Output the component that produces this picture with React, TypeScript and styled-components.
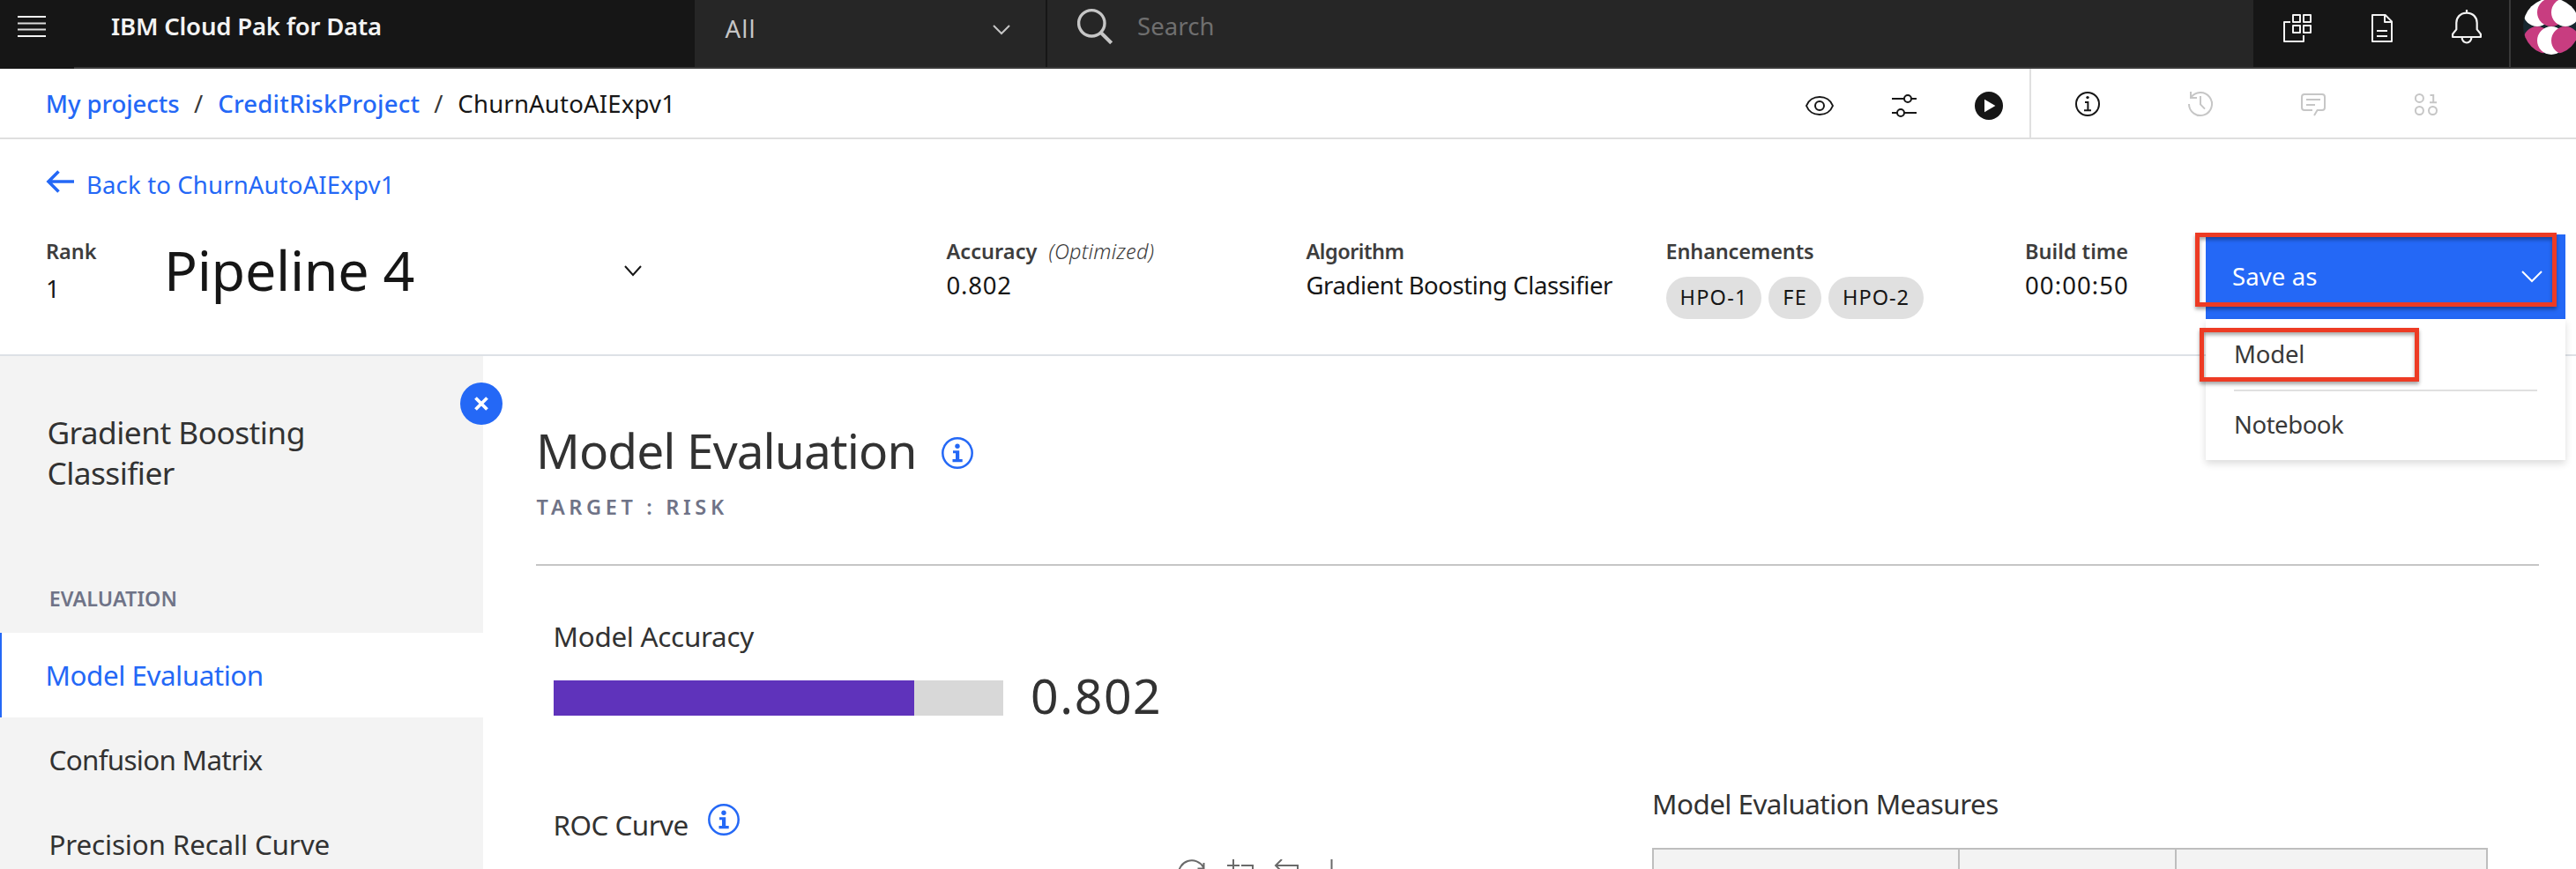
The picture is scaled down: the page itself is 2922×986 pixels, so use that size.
import React from "react";
import styled, { createGlobalStyle, css } from "styled-components";

const color = {
  ink: "#161616",
  text: "#323232",
  label: "#3d3d3d",
  blue: "#2468f6",
  slate: "#6f7387",
  panel: "#f3f3f3",
  line: "#e0e0e0",
  purple: "#5f33bb",
  alert: "#ed3b24",
};

const GlobalStyle = createGlobalStyle`
  * { box-sizing: border-box; }
  body {
    margin: 0;
    background: #fff;
    color: ${color.ink};
    font-family: "Noto Sans", "Open Sans", sans-serif;
    font-size: 27.5px;
    overflow: hidden;
  }
  svg { display: block; flex: none; }
`;

const Page = styled.div`
  display: flex;
  flex-direction: column;
  width: 2922px;
  height: 986px;
  overflow: hidden;
`;

/* Text with its own tracking, in px */
const Tracked = styled.span<{ $ls?: number }>`
  letter-spacing: ${(p) => p.$ls ?? 0}px;
  white-space: nowrap;
`;

/* ---------- Global header ---------- */

const Header = styled.header`
  display: flex;
  flex: none;
  height: 78px;
  background: ${color.ink};
`;

const MenuButton = styled.div`
  width: 84px;
  padding: 18px 0 0 20px;
`;

const HeaderMain = styled.div`
  display: flex;
  flex: 1;
  border-bottom: 2px solid #393939;
`;

const Brand = styled.div`
  width: 704px;
  padding-left: 42px;
  line-height: 59px;
  font-weight: 600;
  color: #f3f3f3;
`;

const ScopeSelect = styled.div`
  display: flex;
  justify-content: space-between;
  width: 400px;
  padding: 2px 40px 0 34.5px;
  border-right: 2px solid ${color.ink};
  background: #262626;
  color: #c6c6c6;
  line-height: 61px;
`;

const SearchBox = styled.div`
  display: flex;
  flex: 1;
  gap: 28px;
  padding-left: 34px;
  background: #262626;
  color: #6f6f6f;
  line-height: 60px;
`;

const HeaderActions = styled.div`
  display: flex;
  width: 290px;
  padding-left: 2px;
`;

const IconCell = styled.div<{ $w: number; $h: number }>`
  display: flex;
  align-items: center;
  justify-content: center;
  width: ${(p) => p.$w}px;
  height: ${(p) => p.$h}px;
`;

const UserCell = styled.div`
  width: 76px;
  padding-left: 14px;
  border-left: 2px solid #393939;
  overflow: hidden;
`;

/* ---------- Breadcrumb bar ---------- */

const CrumbBar = styled.div`
  display: flex;
  flex: none;
  justify-content: space-between;
  height: 80px;
  padding-left: 51.7px;
  border-bottom: 2px solid #dfdfdf;
`;

const Crumbs = styled.nav`
  display: flex;
  line-height: 80px;
`;

const Crumb = styled.span<{ $w?: number; $ls: number; $link?: boolean }>`
  width: ${(p) => (p.$w ? `${p.$w}px` : "auto")};
  letter-spacing: ${(p) => p.$ls}px;
  white-space: nowrap;
  ${(p) =>
    p.$link &&
    css`
      color: ${color.blue};
      font-weight: 500;
    `}
`;

const Slash = styled.span`
  width: 27.2px;
  color: #393939;
`;

const ToolGroup = styled.div<{ $divided?: boolean }>`
  display: flex;
  width: ${(p) => (p.$divided ? 288 : 618)}px;
  border-right: ${(p) => (p.$divided ? `2px solid ${color.line}` : "none")};
  & > * { flex: none; }
`;

const Tools = styled.div`
  display: flex;
`;

/* ---------- Pipeline summary ---------- */

const Summary = styled.section`
  flex: none;
  height: 246px;
  padding: 32px 0 0 52px;
  border-bottom: 2px solid #dde1e6;
`;

const BackLink = styled.div`
  display: flex;
  gap: 14px;
  height: 76px;
  line-height: 40px;
  color: ${color.blue};
  svg { margin-top: 2px; }
`;

const SummaryGrid = styled.div`
  display: grid;
  grid-template-columns: 134px 887.5px 408px 408px 407.5px 205px 408px;
`;

const Metric = styled.div<{ $nudge?: number }>`
  padding-top: 3px;
  & > :last-child { margin-top: ${(p) => p.$nudge ?? 3}px; }
`;

const MetricLabel = styled.div<{ $ls?: number }>`
  font-size: 23.5px;
  font-weight: 600;
  line-height: 32px;
  letter-spacing: ${(p) => p.$ls ?? 0}px;
  color: ${color.label};
  white-space: nowrap;
`;

const Hint = styled.i`
  margin-left: 13px;
  font-weight: 300;
  letter-spacing: 0.24px;
`;

const MetricValue = styled.div<{ $ls?: number }>`
  line-height: 40px;
  letter-spacing: ${(p) => p.$ls ?? 0}px;
  white-space: nowrap;
`;

const PipelinePicker = styled.div`
  display: flex;
  justify-content: space-between;
  width: 542px;
  height: 80px;
  font-size: 62.8px;
  line-height: 79px;
  svg { margin-top: 35px; }
`;

const Tags = styled.div`
  display: flex;
  gap: 8px;
`;

const Tag = styled.span<{ $w: number; $ls: number }>`
  width: ${(p) => p.$w}px;
  height: 48px;
  border-radius: 24px;
  background: ${color.line};
  font-size: 23.5px;
  line-height: 46px;
  letter-spacing: ${(p) => p.$ls}px;
  text-indent: ${(p) => p.$ls}px;
  text-align: center;
`;

const SaveAs = styled.div`
  position: relative;
  width: 408px;
`;

const SaveButton = styled.div`
  display: flex;
  justify-content: space-between;
  height: 96px;
  padding: 0 26px 0 30px;
  background: ${color.blue};
  color: #fff;
  line-height: 96px;
  svg { margin-top: 41px; }
`;

const SaveMenu = styled.div`
  position: absolute;
  top: 96px;
  left: 0;
  z-index: 1;
  width: 408px;
  height: 160px;
  padding: 0 32px;
  background: #fff;
  box-shadow: 0 4px 8px rgba(0, 0, 0, 0.14);
  color: #393939;
`;

const MenuItem = styled.div<{ $ls: number }>`
  height: 80px;
  line-height: 79px;
  letter-spacing: ${(p) => p.$ls}px;
  & + & {
    border-top: 2px solid ${color.line};
    line-height: 76px;
  }
`;

const Callout = styled.div<{ $x: number; $y: number; $w: number; $h: number }>`
  position: absolute;
  left: ${(p) => p.$x}px;
  top: ${(p) => p.$y}px;
  z-index: 2;
  width: ${(p) => p.$w}px;
  height: ${(p) => p.$h}px;
  border: 5px solid ${color.alert};
  box-shadow: 0 3px 4px rgba(0, 0, 0, 0.35), inset 0 3px 4px rgba(0, 0, 0, 0.35);
`;

/* ---------- Body ---------- */

const Body = styled.div`
  display: flex;
  flex: 1;
  min-height: 0;
`;

const Sidebar = styled.aside`
  position: relative;
  flex: none;
  width: 548px;
  padding-top: 63px;
  background: ${color.panel};
  color: ${color.text};
`;

const CloseButton = styled.div`
  position: absolute;
  top: 30px;
  right: -22px;
  display: flex;
  align-items: center;
  justify-content: center;
  width: 48px;
  height: 48px;
  border-radius: 50%;
  background: ${color.blue};
`;

const SidebarTitle = styled.div`
  padding-left: 53.4px;
  font-size: 35.3px;
  line-height: 46px;
  letter-spacing: -0.55px;
`;

const SidebarSection = styled.div`
  margin: 104px 0 23px;
  padding-left: 55.7px;
  font-size: 23.3px;
  font-weight: 600;
  line-height: 32px;
  letter-spacing: 0.05px;
  color: ${color.slate};
`;

const NavItem = styled.div<{ $ls: number; $active?: boolean }>`
  height: 96px;
  padding-left: ${(p) => (p.$active ? 49.5 : 53.5)}px;
  border-left: 2px solid ${(p) => (p.$active ? color.blue : color.panel)};
  background: ${(p) => (p.$active ? "#fff" : color.panel)};
  color: ${(p) => (p.$active ? color.blue : color.text)};
  font-size: 31.4px;
  line-height: 95px;
  letter-spacing: ${(p) => p.$ls}px;
`;

const Main = styled.main`
  flex: 1;
  padding: 74px 42px 0 60px;
  color: ${color.text};
`;

const TitleRow = styled.div`
  display: flex;
  align-items: center;
  gap: 28px;
  height: 64px;
  font-size: 55px;
  line-height: 63px;
  svg { margin-top: 8px; }
`;

const Target = styled.div`
  margin: 17px 0 49px;
  padding-left: 0.5px;
  font-size: 23.5px;
  font-weight: 600;
  line-height: 32px;
  letter-spacing: 4.65px;
  color: ${color.slate};
`;

const Rule = styled.div`
  height: 2px;
  background: #c6c6c6;
`;

const SectionTitle = styled.div<{ $ls: number }>`
  font-size: 31.4px;
  line-height: 44px;
  letter-spacing: ${(p) => p.$ls}px;
  white-space: nowrap;
`;

const Accuracy = styled.div`
  padding: 58px 0 0 19.5px;
`;

const ScoreRow = styled.div`
  display: flex;
  gap: 31px;
  height: 40px;
  margin: 28px 0 0 0.5px;
`;

const Track = styled.div`
  width: 510px;
  background: #d8d8d8;
`;

const Fill = styled.div`
  height: 100%;
  background: ${color.purple};
`;

const Score = styled.div`
  font-size: 55.3px;
  line-height: 33px;
  letter-spacing: 1.6px;
`;

const Columns = styled.div`
  display: flex;
  padding-left: 19.5px;
`;

const RocColumn = styled.div`
  width: 1246.5px;
  padding-top: 100px;
`;

const RocHeading = styled.div`
  display: flex;
  gap: 22px;
  height: 46px;
  & > ${SectionTitle} { margin-top: 2px; }
`;

const ChartTools = styled.div`
  display: flex;
  gap: 22px;
  margin: 17px 0 0 708px;
`;

const Measures = styled.div`
  flex: none;
  width: 948px;
  padding-top: 78px;
`;

const MeasuresTable = styled.div`
  display: grid;
  grid-template-columns: 345px 246px 1fr;
  height: 60px;
  margin-top: 28px;
  border: 2px solid #bebebe;
  background: ${color.panel};
`;

const HeadCell = styled.div`
  & + & { border-left: 2px solid #bebebe; }
`;

/* ---------- Icons ---------- */

type IconProps = { w: number; h: number; sw?: number; stroke?: string; children: React.ReactNode };
const Icon = ({ w, h, sw = 2, stroke = color.ink, children }: IconProps) => (
  <svg width={w} height={h} viewBox={`0 0 ${w} ${h}`} fill="none" stroke={stroke} strokeWidth={sw}>
    {children}
  </svg>
);

const MenuIcon = () => (
  <Icon w={32} h={24} stroke="#f3f3f3">
    <path d="M0 1h32M0 23h32" />
    <path d="M0 8.600h32M0 15.600h32" stroke="#dcdcdc" />
  </Icon>
);

const Chevron = ({ w, h, stroke }: { w: number; h: number; stroke: string }) => (
  <Icon w={w} h={h} stroke={stroke}>
    <path d={`M1 1L${w / 2} ${h - 2}L${w - 1} 1`} />
  </Icon>
);

const SearchIcon = () => (
  <Icon w={40} h={52} stroke="#c6c6c6" sw={3.4}>
    <circle cx="16.3" cy="26.3" r="14.7" />
    <path d="M26.8 37L38.6 48.8" strokeWidth="4" />
  </Icon>
);

const SwitcherIcon = () => (
  <Icon w={32} h={32} stroke="#f3f3f3">
    <path d="M11 1h8v8h-8zM23 1h8v8h-8zM11 13h8v8h-8zM23 13h8v8h-8z" strokeLinejoin="round" />
    <path d="M8 9H1v22h22v-7" strokeLinejoin="round" />
  </Icon>
);

const DocumentIcon = () => (
  <Icon w={24} h={32} stroke="#f3f3f3">
    <path d="M1 1h14.6L23 8.4V31H1zM15 1v8h8M6 19h12M6 25h12" strokeLinejoin="round" />
  </Icon>
);

const BellIcon = () => (
  <Icon w={34} h={40} stroke="#f3f3f3" sw={2.2}>
    <path
      d="M17 0v4M17 3.6C10 3.6 5.3 8.6 5.3 15v7.4L1.1 27.6V31h31.8v-3.4l-4.2-5.2V15C28.7 8.6 24 3.6 17 3.6z"
      strokeLinejoin="round"
    />
    <path d="M11.6 31.5a5.4 6 0 0 0 10.8 0" />
  </Icon>
);

const Avatar = () => (
  <svg width={64} height={62} viewBox="0 0 64 62">
    <clipPath id="avatar">
      <circle cx="32" cy="30" r="32" />
    </clipPath>
    <g clipPath="url(#avatar)">
      <rect width="64" height="62" fill="#17272f" />
      <circle cx="16" cy="14" r="16" fill="#fff" />
      <circle cx="32" cy="14" r="16" fill="#c83d80" />
      <circle cx="48" cy="14" r="16" fill="#fff" />
      <circle cx="16" cy="46" r="16" fill="#c83d80" />
      <circle cx="32" cy="46" r="16" fill="#fff" />
      <circle cx="48" cy="46" r="16" fill="#c83d80" />
    </g>
  </svg>
);

const ViewIcon = () => (
  <Icon w={32} h={32}>
    <path d="M1 16C3.4 9.6 9.4 6 16 6s12.6 3.6 15 10c-2.4 6.4-8.4 10-15 10S3.4 22.4 1 16z" strokeLinejoin="round" />
    <circle cx="16" cy="16" r="5" />
  </Icon>
);

const AdjustIcon = () => (
  <Icon w={32} h={32}>
    <path d="M2 8h14M24 8h6M2 24h6M16 24h14" />
    <circle cx="20" cy="8" r="4" />
    <circle cx="12" cy="24" r="4" />
  </Icon>
);

const PlayIcon = () => (
  <svg width={32} height={32} viewBox="0 0 32 32">
    <circle cx="16" cy="16" r="16" fill={color.ink} />
    <path d="M11 8.8L23.4 16L11 23.2z" fill="#fff" />
  </svg>
);

const InfoOutlineIcon = () => (
  <Icon w={32} h={32}>
    <circle cx="16" cy="16" r="13" />
    <path d="M13 14h3.4v9M12 23.2h8" />
    <circle cx="16" cy="8.6" r="1.7" fill={color.ink} stroke="none" />
  </Icon>
);

const HistoryIcon = () => (
  <Icon w={32} h={32} stroke="#c6c6c6">
    <path d="M3 16A13 13 0 1 0 5.2 8.8M5 2v7h7M16 7v9.4l5 5.2" />
  </Icon>
);

const CommentIcon = () => (
  <Icon w={32} h={32} stroke="#c6c6c6">
    <path d="M15 23H6a3 3 0 0 1-3-3V8a3 3 0 0 1 3-3h20a3 3 0 0 1 3 3v12a3 3 0 0 1-3 3h-5.4L17 29M8 11h16M8 17h10" />
  </Icon>
);

const DataIcon = () => (
  <Icon w={32} h={32} stroke="#c6c6c6">
    <circle cx="8.4" cy="9.4" r="4.5" />
    <circle cx="8.4" cy="23.5" r="4.5" />
    <circle cx="23.5" cy="23.5" r="4.5" />
    <path d="M20.5 6h3.7v8M20 14.2h8" />
  </Icon>
);

const ArrowLeftIcon = () => (
  <Icon w={32} h={28} stroke={color.blue} sw={3.6}>
    <path d="M32 14H3M14.5 2.5L3 14L14.5 25.500" />
  </Icon>
);

const InfoIcon = () => (
  <Icon w={36} h={36} stroke={color.blue} sw={2.5}>
    <circle cx="18" cy="18" r="16.700" />
    <circle cx="18" cy="10.2" r="2.7" fill={color.blue} stroke="none" />
    <path d="M13 15.2h7.200v9.800h3.500v3.200H12.500v-3.200H16v-6.800h-3z" fill={color.blue} stroke="none" />
  </Icon>
);

const CloseIcon = () => (
  <Icon w={16} h={16} stroke="#fff" sw={3.8}>
    <path d="M1.500 1.500l13 13M14.500 1.500l-13 13" />
  </Icon>
);

const toolPaths = [
  "M1 18A15 15 0 0 1 29 9M29.500 4v6.500h-7",
  "M9 0v14M2 7h14M18 7h13v14",
  "M10 0L3 7l7 7M3 7h25v14H8",
  "M12.500 0v24M5 17l7.500 7 7.500-7",
];

const tools = [<ViewIcon key="view" />, <AdjustIcon key="adjust" />, <PlayIcon key="play" />];
const sideTools = [
  <InfoOutlineIcon key="info" />,
  <HistoryIcon key="history" />,
  <CommentIcon key="comment" />,
  <DataIcon key="data" />,
];

const accuracy = 0.802;

export default function App() {
  return (
    <>
      <GlobalStyle />
      <Page>
        <Header>
          <MenuButton>
            <MenuIcon />
          </MenuButton>
          <HeaderMain>
            <Brand>
              <Tracked $ls={-0.2}>IBM Cloud Pak for Data</Tracked>
            </Brand>
            <ScopeSelect>
              <Tracked $ls={1.2}>All</Tracked>
              <IconCell $w={20} $h={64}>
                <Chevron w={20} h={12} stroke="#c6c6c6" />
              </IconCell>
            </ScopeSelect>
            <SearchBox>
              <SearchIcon />
              <Tracked $ls={0.1}>Search</Tracked>
            </SearchBox>
            <HeaderActions>
              <IconCell $w={96} $h={64}>
                <SwitcherIcon />
              </IconCell>
              <IconCell $w={96} $h={64}>
                <DocumentIcon />
              </IconCell>
              <IconCell $w={96} $h={62}>
                <BellIcon />
              </IconCell>
            </HeaderActions>
            <UserCell>
              <Avatar />
            </UserCell>
          </HeaderMain>
        </Header>

        <CrumbBar>
          <Crumbs>
            <Crumb $link $w={168.3} $ls={-0.05}>My projects</Crumb>
            <Slash>/</Slash>
            <Crumb $link $w={245} $ls={0.25}>CreditRiskProject</Crumb>
            <Slash>/</Slash>
            <Crumb $ls={0.2}>ChurnAutoAIExpv1</Crumb>
          </Crumbs>
          <Tools>
            <ToolGroup $divided>
              {tools.map((icon, i) => (
                <IconCell key={i} $w={96} $h={84}>{icon}</IconCell>
              ))}
            </ToolGroup>
            <ToolGroup>
              {sideTools.map((icon, i) => (
                <IconCell key={i} $w={128} $h={80}>{icon}</IconCell>
              ))}
            </ToolGroup>
          </Tools>
        </CrumbBar>

        <Summary>
          <BackLink>
            <ArrowLeftIcon />
            <Tracked $ls={0.16}>Back to ChurnAutoAIExpv1</Tracked>
          </BackLink>
          <SummaryGrid>
            <Metric $nudge={7}>
              <MetricLabel>Rank</MetricLabel>
              <MetricValue>1</MetricValue>
            </Metric>
            <PipelinePicker>
              <Tracked $ls={-0.3}>Pipeline 4</Tracked>
              <Chevron w={20} h={13} stroke={color.ink} />
            </PipelinePicker>
            <Metric>
              <MetricLabel $ls={0.05}>
                Accuracy<Hint>(Optimized)</Hint>
              </MetricLabel>
              <MetricValue $ls={0.8}>{accuracy}</MetricValue>
            </Metric>
            <Metric>
              <MetricLabel $ls={-0.5}>Algorithm</MetricLabel>
              <MetricValue $ls={-0.41}>Gradient Boosting Classifier</MetricValue>
            </Metric>
            <Metric $nudge={13}>
              <MetricLabel $ls={-0.15}>Enhancements</MetricLabel>
              <Tags>
                <Tag $w={108} $ls={1.2}>HPO-1</Tag>
                <Tag $w={60} $ls={1.2}>FE</Tag>
                <Tag $w={108} $ls={1}>HPO-2</Tag>
              </Tags>
            </Metric>
            <Metric>
              <MetricLabel>Build time</MetricLabel>
              <MetricValue $ls={1.1}>00:00:50</MetricValue>
            </Metric>
            <SaveAs>
              <SaveButton>
                <Tracked $ls={0.12}>Save as</Tracked>
                <Chevron w={24} h={14} stroke="#fff" />
              </SaveButton>
              <SaveMenu>
                <MenuItem $ls={-0.2}>Model</MenuItem>
                <MenuItem $ls={-0.45}>Notebook</MenuItem>
              </SaveMenu>
              <Callout $x={-12} $y={-2} $w={410} $h={84} />
              <Callout $x={-7} $y={106} $w={249} $h={61} />
            </SaveAs>
          </SummaryGrid>
        </Summary>

        <Body>
          <Sidebar>
            <CloseButton>
              <CloseIcon />
            </CloseButton>
            <SidebarTitle>
              Gradient Boosting
              <br />
              Classifier
            </SidebarTitle>
            <SidebarSection>EVALUATION</SidebarSection>
            <NavItem $active $ls={-0.46}>Model Evaluation</NavItem>
            <NavItem $ls={-0.7}>Confusion Matrix</NavItem>
            <NavItem $ls={-0.16}>Precision Recall Curve</NavItem>
          </Sidebar>
          <Main>
            <TitleRow>
              <Tracked $ls={-0.92}>Model Evaluation</Tracked>
              <InfoIcon />
            </TitleRow>
            <Target>TARGET : RISK</Target>
            <Rule />
            <Accuracy>
              <SectionTitle $ls={-0.28}>Model Accuracy</SectionTitle>
              <ScoreRow>
                <Track>
                  <Fill style={{ width: `${accuracy * 100}%` }} />
                </Track>
                <Score>{accuracy}</Score>
              </ScoreRow>
            </Accuracy>
            <Columns>
              <RocColumn>
                <RocHeading>
                  <SectionTitle $ls={-0.52}>ROC Curve</SectionTitle>
                  <InfoIcon />
                </RocHeading>
                <ChartTools>
                  {toolPaths.map((d) => (
                    <Icon key={d} w={32} h={32} stroke="#6a6a6a">
                      <path d={d} />
                    </Icon>
                  ))}
                </ChartTools>
              </RocColumn>
              <Measures>
                <SectionTitle $ls={-0.54}>Model Evaluation Measures</SectionTitle>
                <MeasuresTable>
                  <HeadCell />
                  <HeadCell />
                  <HeadCell />
                </MeasuresTable>
              </Measures>
            </Columns>
          </Main>
        </Body>
      </Page>
    </>
  );
}
